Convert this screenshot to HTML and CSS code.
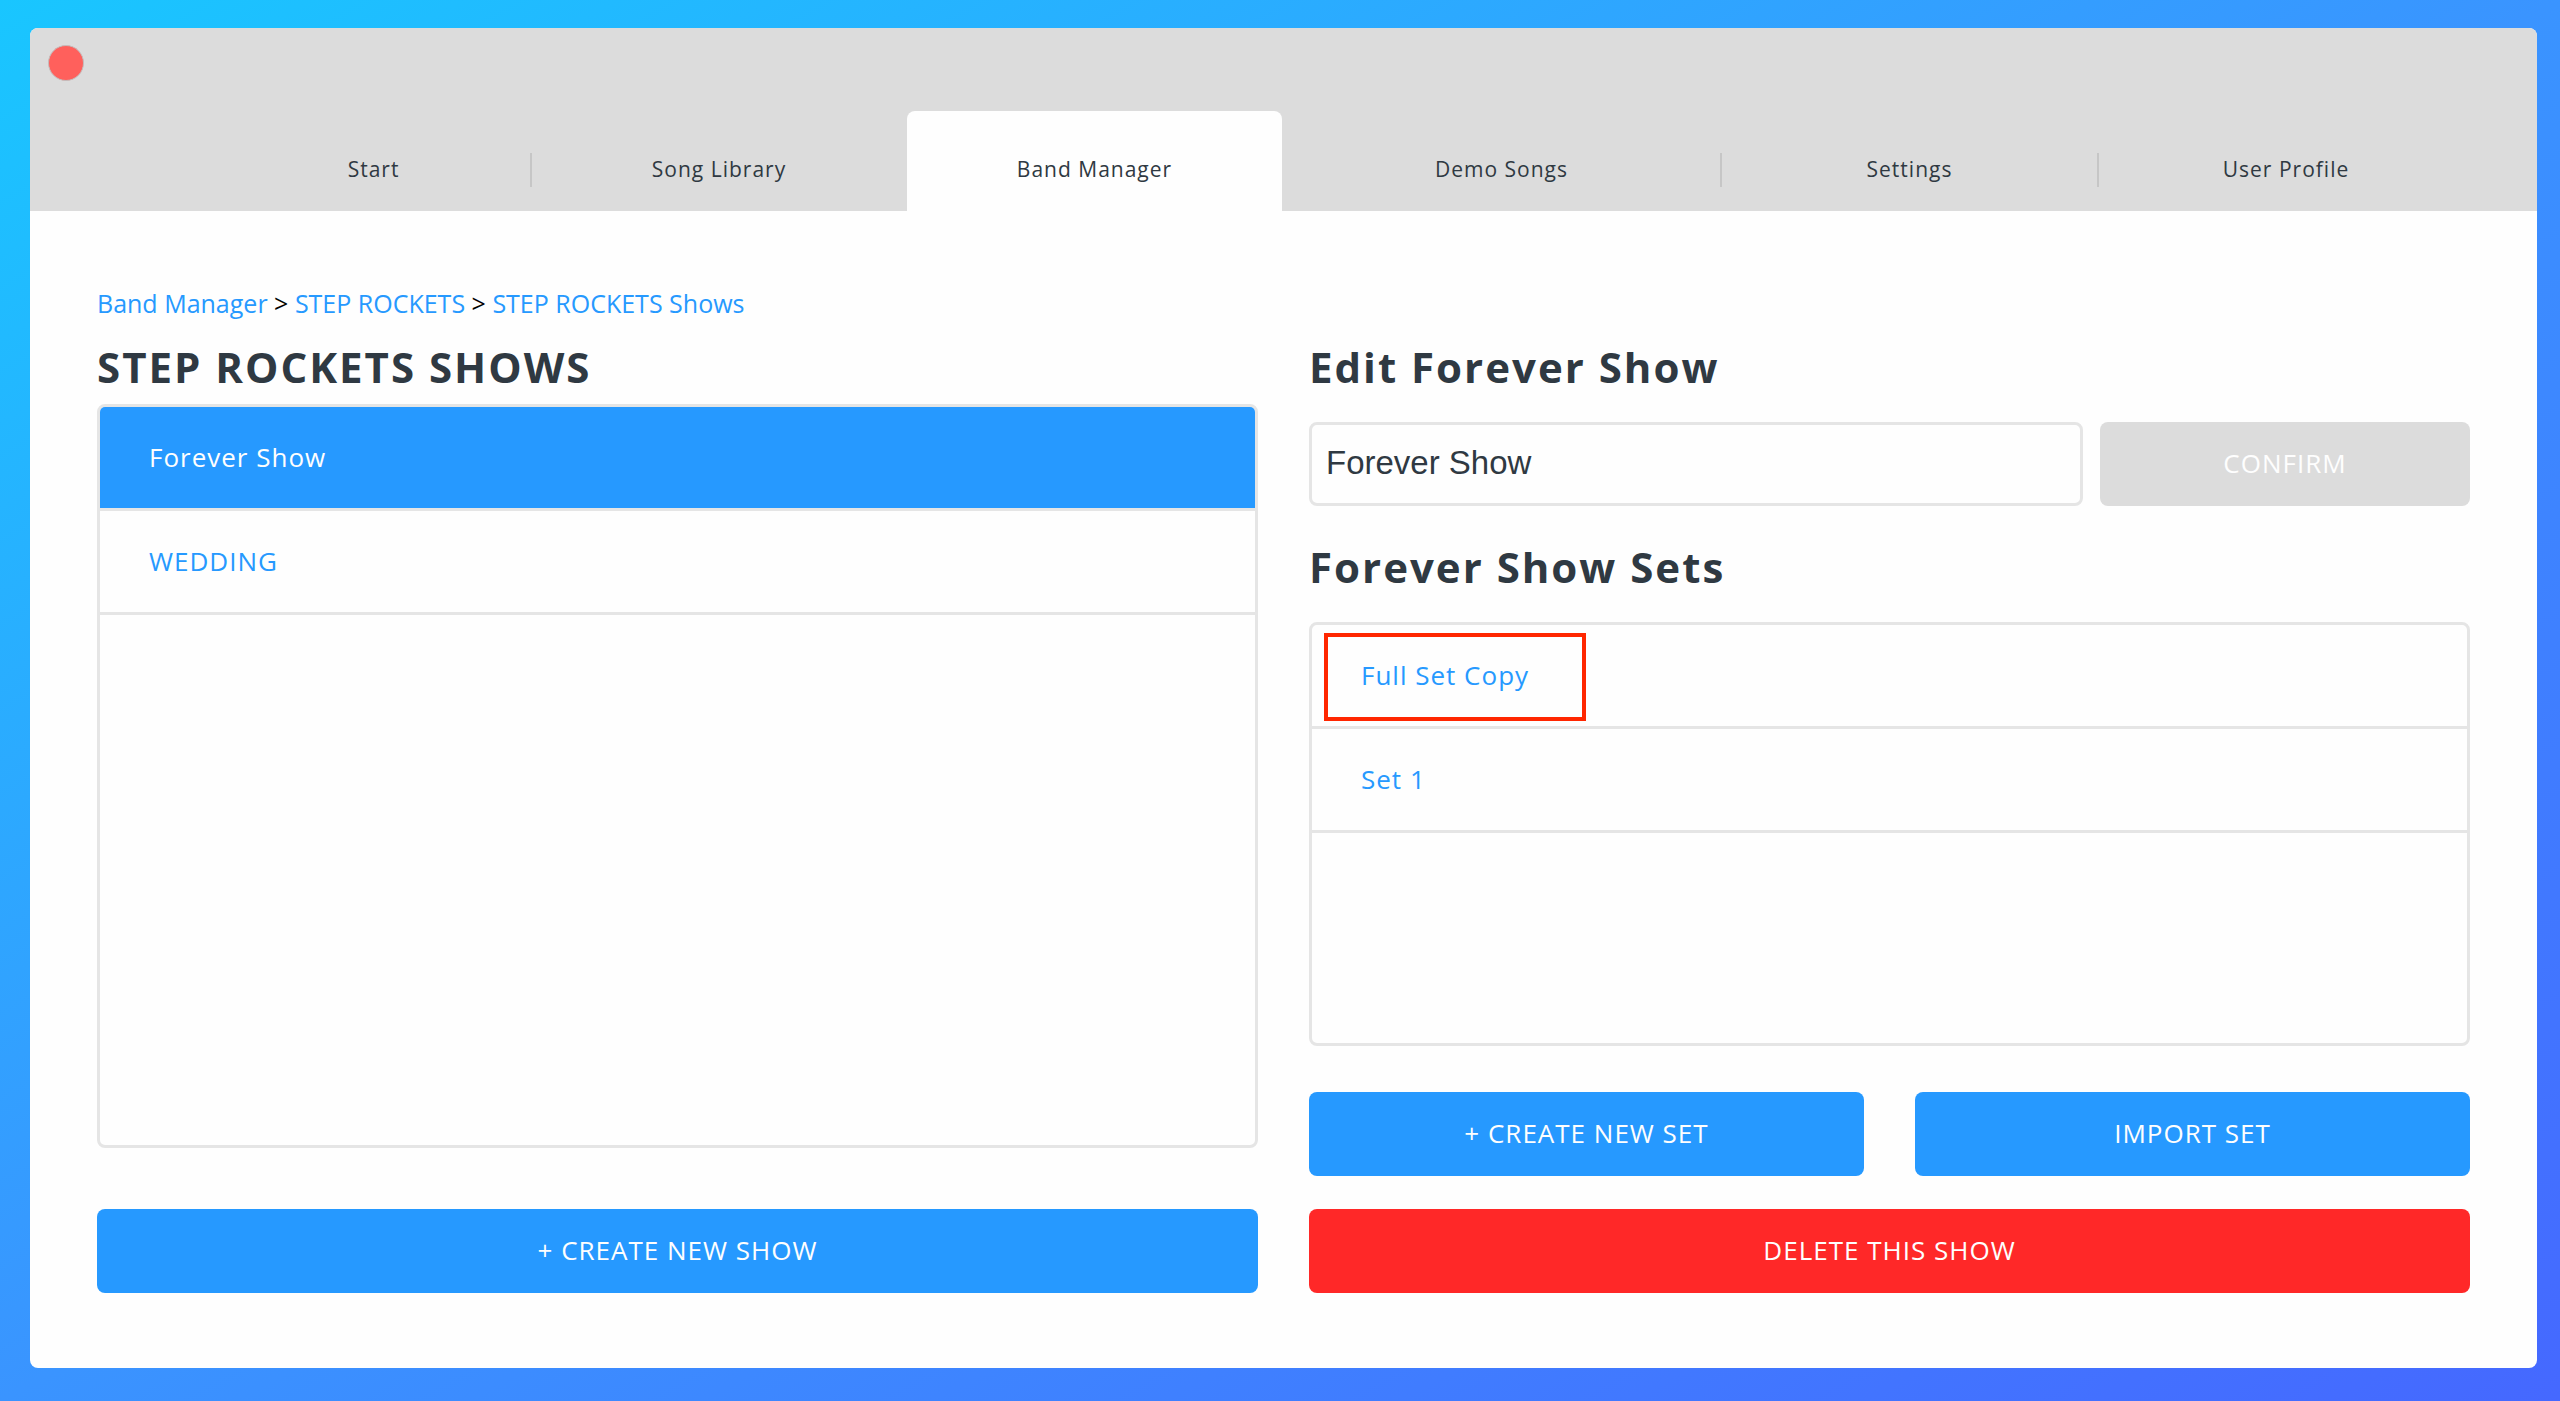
FILE: index.html
```html
<!DOCTYPE html>
<html lang="en">
<head>
    <meta charset="UTF-8">
    <meta name="viewport" content="width=device-width, initial-scale=1.0">
    <title>Band Manager</title>
    <link rel="stylesheet" href="styles.css">
</head>
<body>
    <div class="window">
        <header class="header">
            <button class="close" type="button" aria-label="Close"></button>
            <nav class="tabs">
                <a class="tab" href="#">Start</a>
                <a class="tab divided" href="#">Song Library</a>
                <a class="tab active" href="#">Band Manager</a>
                <a class="tab" href="#">Demo Songs</a>
                <a class="tab divided" href="#">Settings</a>
                <a class="tab divided" href="#">User Profile</a>
            </nav>
        </header>

        <main class="content">
            <nav class="breadcrumb">
                <a href="#">Band Manager</a> &gt; <a href="#">STEP ROCKETS</a> &gt; <a href="#">STEP ROCKETS Shows</a>
            </nav>

            <div class="columns">
                <section class="column">
                    <h2 class="list-title">STEP ROCKETS SHOWS</h2>
                    <ul class="list">
                        <li><a class="selected" href="#">Forever Show</a></li>
                        <li><a href="#">WEDDING</a></li>
                    </ul>
                    <button class="button create-show" type="button">+ CREATE NEW SHOW</button>
                </section>

                <section class="column">
                    <h2><label for="showName">Edit Forever Show</label></h2>
                    <form class="edit-form">
                        <input type="text" id="showName" name="showName" value="Forever Show">
                        <button class="button" type="submit" disabled>CONFIRM</button>
                    </form>

                    <h2>Forever Show Sets</h2>
                    <ul class="list">
                        <li><a class="highlight" href="#">Full Set Copy</a></li>
                        <li><a href="#">Set 1</a></li>
                    </ul>
                    <div class="set-actions">
                        <button class="button" type="button">+ CREATE NEW SET</button>
                        <button class="button" type="button">IMPORT SET</button>
                    </div>
                    <button class="button delete" type="button">DELETE THIS SHOW</button>
                </section>
            </div>
        </main>
    </div>
</body>
</html>
```
FILE: styles.css
```css
*,
*::before,
*::after {
    box-sizing: border-box;
}

body {
    display: flex;
    min-height: 100vh;
    margin: 0;
    padding: 28px 23px 33px 30px;
    font-family: "Open Sans", sans-serif;
    font-size: 26px;
    line-height: 36px;
    color: #2f3942;
    background: linear-gradient(to bottom right, #19c6ff, #3a94ff 50%, #4568ff);
}

a {
    color: #2699ff;
    text-decoration: none;
}

.window {
    display: flex;
    flex-direction: column;
    flex: 1;
    overflow: hidden;
    background-color: #fefefe;
    border-radius: 8px;
}

/* header */
.header {
    padding: 17px 0 0 18px;
    background-color: #dcdcdc;
}

.close {
    display: block;
    width: 36px;
    height: 36px;
    padding: 0;
    background-color: #ff605c;
    border: 1px solid #c4bcbc;
    border-radius: 50%;
    cursor: pointer;
}

.tabs {
    display: grid;
    grid-template-columns: 315fr 376fr 375fr 439fr 377fr 376fr;
    margin-top: 30px;
    padding: 0 63px 0 168px;
}

.tab {
    position: relative;
    padding: 40px 0 24px;
    border-radius: 8px 8px 0 0;
    font-size: 21px;
    letter-spacing: 1px;
    text-align: center;
    color: #2f3942;
}

.tab.active {
    background-color: #fefefe;
}

.tab.divided::before {
    content: "";
    position: absolute;
    left: -1px;
    top: 42px;
    width: 2px;
    height: 34px;
    background-color: #c6c6c6;
}

/* content */
.content {
    display: flex;
    flex-direction: column;
    flex: 1;
    padding: 74px 67px 75px;
}

.breadcrumb {
    margin-bottom: 17px;
    font-size: 25px;
    color: #000;
}

.columns {
    display: grid;
    grid-template-columns: 1fr 1fr;
    gap: 51px;
    flex: 1;
}

.column {
    display: flex;
    flex-direction: column;
}

h2 {
    margin: 0 0 26px;
    font-size: 42px;
    line-height: 58px;
    font-weight: bold;
    letter-spacing: 2px;
}

.list-title {
    margin-bottom: 8px;
}

.list {
    flex: 1;
    margin: 0;
    padding: 0;
    list-style: none;
    border: 3px solid #e5e5e5;
    border-radius: 8px;
    overflow: hidden;
}

.list li {
    border-bottom: 3px solid #e5e5e5;
}

.list a {
    display: block;
    position: relative;
    padding: 32px 49px 33px;
    letter-spacing: 1px;
}

.list .selected {
    color: #fefefe;
    background-color: #2699ff;
}

.list .highlight::after {
    content: "";
    position: absolute;
    left: 12px;
    top: 8px;
    width: 262px;
    height: 88px;
    border: 4px solid #ff2600;
}

.button {
    height: 84px;
    padding: 0 20px 2px;
    border: none;
    border-radius: 8px;
    font-family: inherit;
    font-size: 26px;
    font-weight: 500;
    letter-spacing: 1px;
    color: #fefefe;
    background-color: #2699ff;
    cursor: pointer;
}

.button:disabled {
    background-color: #dcdcdc;
    cursor: default;
}

.create-show {
    margin-top: 61px;
}

.edit-form {
    display: grid;
    grid-template-columns: 774fr 370fr;
    gap: 17px;
    margin-bottom: 32px;
}

.edit-form input {
    min-width: 0;
    height: 84px;
    padding: 0 14px 2px;
    border: 3px solid #e5e5e5;
    border-radius: 8px;
    font-family: "Liberation Sans", Arial, sans-serif;
    font-size: 33px;
    color: #2f3942;
    background-color: #fefefe;
}

.set-actions {
    display: grid;
    grid-template-columns: 1fr 1fr;
    gap: 51px;
    margin-top: 46px;
}

.delete {
    margin-top: 33px;
    background-color: #ff2828;
}
```
